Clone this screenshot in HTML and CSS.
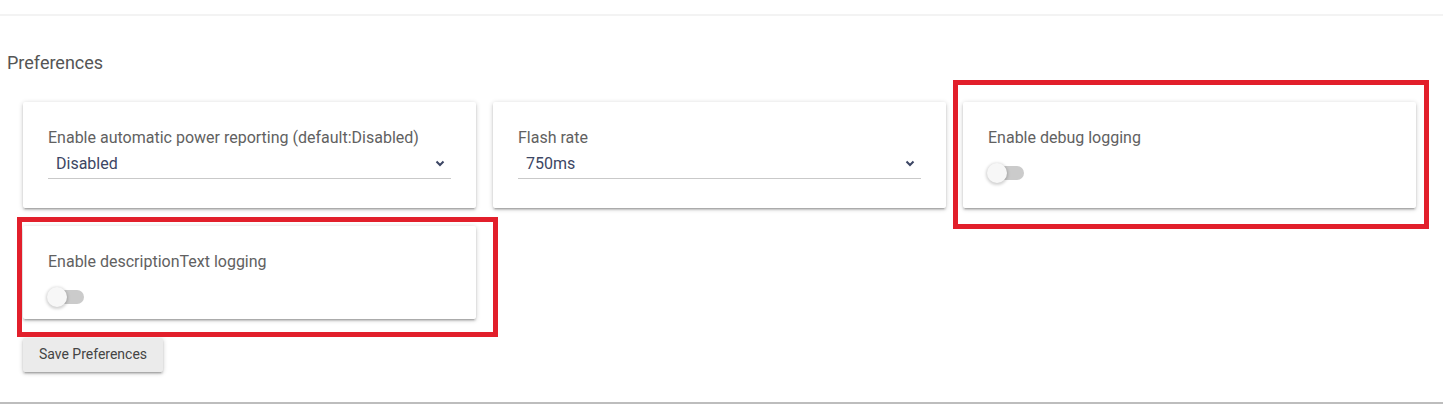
FILE: index.html
```html
<!DOCTYPE html>
<html lang="en">
<head>
  <meta charset="UTF-8">
  <title>Preferences</title>
  <link rel="stylesheet" href="styles.css">
</head>
<body>

<div class="page">
  <div class="topbar"></div>

  <h3 class="section-title">Preferences</h3>

  <div class="pref-grid">
    <div class="card">
      <div class="field-label">Enable automatic power reporting (default:Disabled)</div>
      <div class="select">
        <span>Disabled</span>
        <svg class="chevron" width="10" height="7" viewBox="0 0 10 7"><path d="M1.5 1.5 L5 5 L8.5 1.5" fill="none" stroke="#3c4664" stroke-width="2"/></svg>
      </div>
    </div>

    <div class="card">
      <div class="field-label">Flash rate</div>
      <div class="select">
        <span>750ms</span>
        <svg class="chevron" width="10" height="7" viewBox="0 0 10 7"><path d="M1.5 1.5 L5 5 L8.5 1.5" fill="none" stroke="#3c4664" stroke-width="2"/></svg>
      </div>
    </div>

    <div class="card toggle-card">
      <div class="field-label">Enable debug logging</div>
      <div class="switch"><span class="lever"></span><span class="knob"></span></div>
    </div>

    <div class="card toggle-card">
      <div class="field-label">Enable descriptionText logging</div>
      <div class="switch"><span class="lever"></span><span class="knob"></span></div>
    </div>
  </div>

  <button class="save-btn">Save Preferences</button>

  <div class="bottom-line"></div>

  <!-- annotation boxes -->
  <div class="mark mark-debug"></div>
  <div class="mark mark-desc"></div>
</div>

</body>
</html>
```

FILE: styles.css
```css
body {
  margin: 0;
  font-family: Roboto, "Liberation Sans", Arial, sans-serif;
  background: #fff;
  color: #555;
}

.page {
  position: relative;
  height: 405px;
  overflow: hidden;
}

.topbar {
  height: 14px;
  border-bottom: 2px solid #f3f3f3;
}

.section-title {
  margin: 0;
  padding: 36px 0 0 7px;
  height: 22px;
  font-size: 18px;
  font-weight: 400;
  line-height: 22px;
  color: #555;
}

.pref-grid {
  display: grid;
  grid-template-columns: repeat(3, 453px);
  column-gap: 17px;
  row-gap: 18px;
  padding: 28px 0 0 23px;
}

.card {
  background: #fff;
  padding: 24px 25px 0;
  border-radius: 2px;
  box-shadow: 0 2px 2px 0 rgba(0,0,0,0.14), 0 3px 1px -2px rgba(0,0,0,0.12), 0 1px 5px 0 rgba(0,0,0,0.2);
}

.field-label {
  font-size: 16px;
  line-height: 22px;
  padding-top: 1px;
  color: #616161;
}

.select {
  display: flex;
  align-items: center;
  justify-content: space-between;
  height: 29px;
  margin-bottom: 29px;
  padding: 0 6px 0 8px;
  border-bottom: 1px solid #c9c9c9;
  font-size: 16px;
  color: #3c4664;
}

.toggle-card {
  padding-bottom: 11px;
}

.switch {
  position: relative;
  width: 36px;
  height: 22px;
  margin-top: 13px;
}

.lever {
  position: absolute;
  left: 2px;
  top: 4px;
  width: 34px;
  height: 14px;
  border-radius: 7px;
  background: #cbcbcb;
}

.knob {
  position: absolute;
  left: -1px;
  top: 1px;
  width: 20px;
  height: 20px;
  border-radius: 50%;
  background: #f7f7f7;
  box-shadow: 0 1px 3px 1px rgba(0,0,0,0.18);
}

.save-btn {
  display: block;
  margin: 19px 0 0 23px;
  width: 140px;
  height: 34px;
  padding: 0 0 3px;
  border: none;
  border-radius: 2px;
  background: #ebebeb;
  font-family: Roboto, "Liberation Sans", Arial, sans-serif;
  font-size: 14px;
  color: #444;
  box-shadow: 0 2px 2px 0 rgba(0,0,0,0.14), 0 3px 1px -2px rgba(0,0,0,0.12), 0 1px 5px 0 rgba(0,0,0,0.2);
}

.bottom-line {
  position: absolute;
  left: 0;
  right: 0;
  top: 402px;
  height: 2px;
  background: #bdbdbd;
}

.mark {
  position: absolute;
  border: 5px solid #e21f2b;
  box-sizing: border-box;
}

.mark-debug {
  left: 953px;
  top: 80px;
  width: 476px;
  height: 149px;
}

.mark-desc {
  left: 17px;
  top: 217px;
  width: 481px;
  height: 120px;
}
```
